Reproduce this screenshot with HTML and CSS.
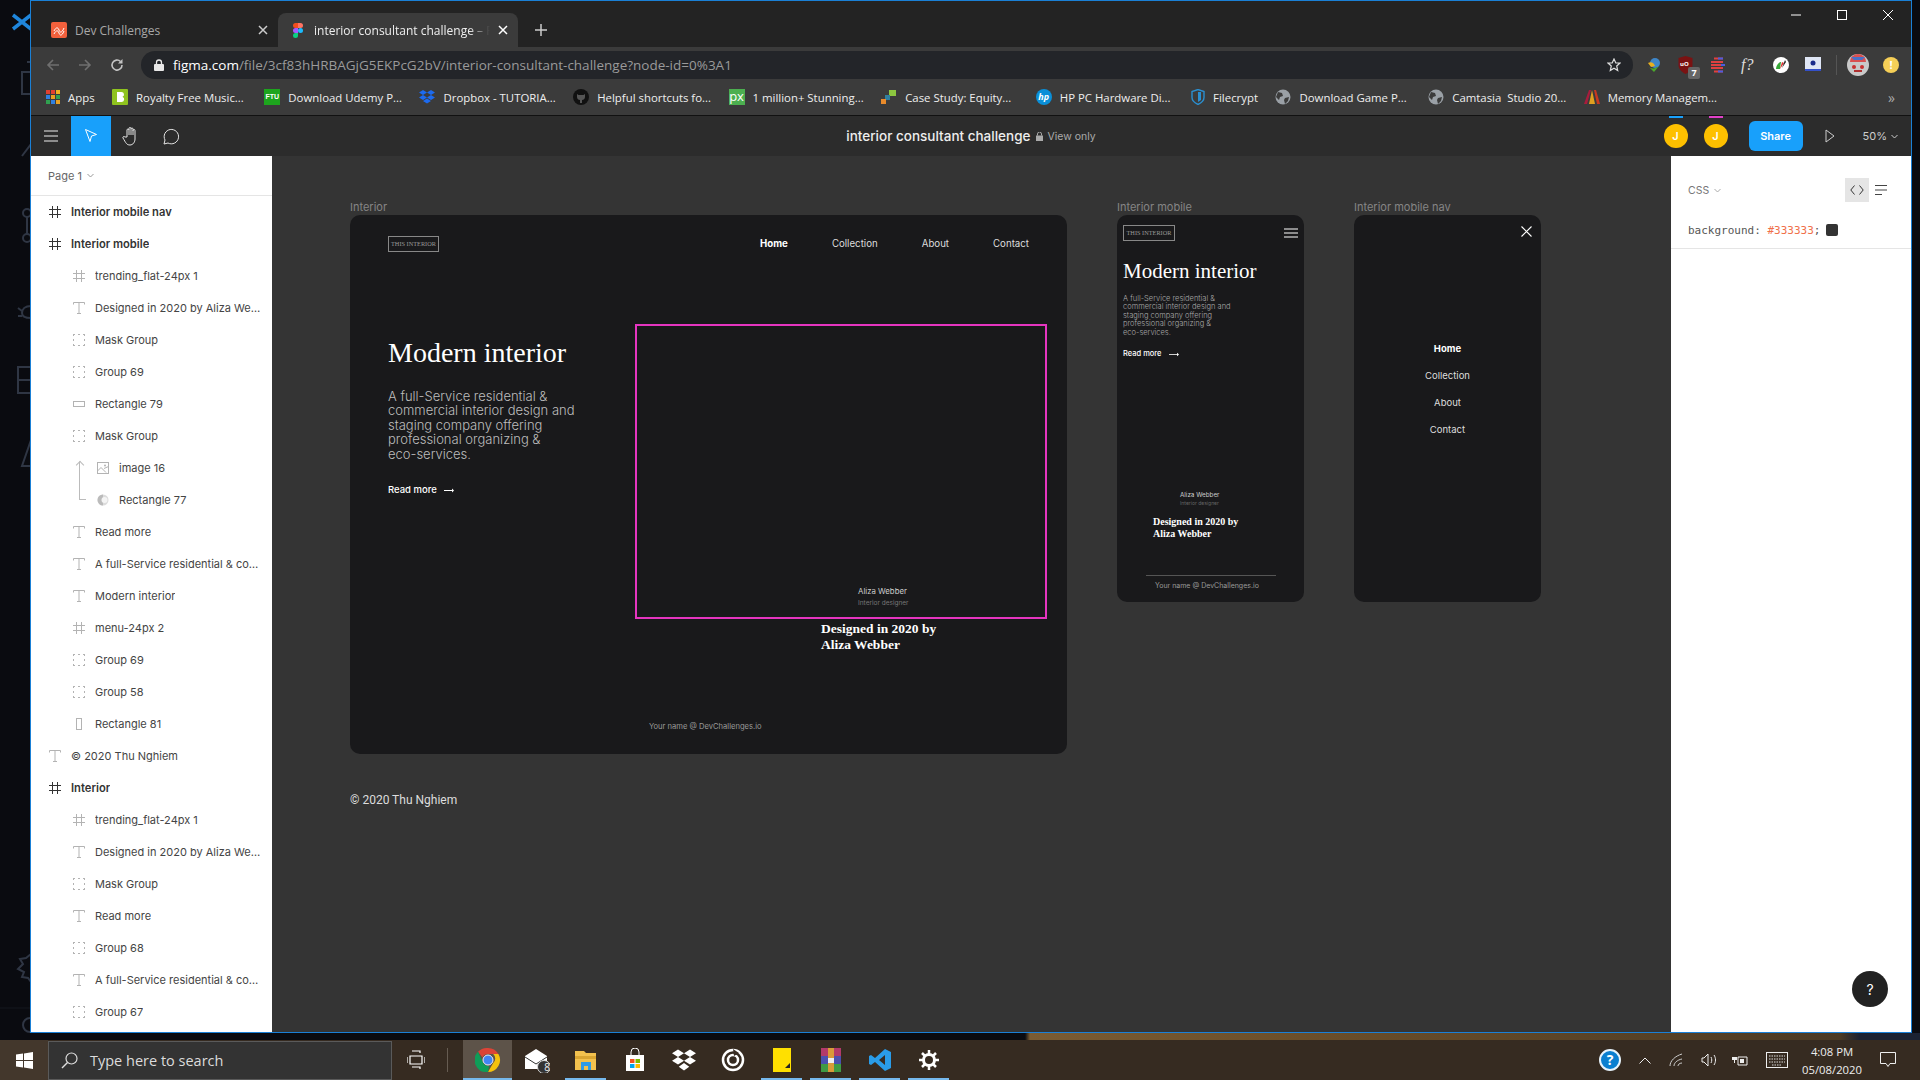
FILE: index.html
```html
<!DOCTYPE html>
<html lang="en">
<head>
  <meta charset="UTF-8" />
  <title>interior consultant challenge – Figma</title>
  <link rel="stylesheet" href="styles.css">
</head>
<body>
  <svg class="sprites" width="0" height="0">
    <symbol id="i-frame" viewBox="0 0 12 12"><path d="M3.5 0v12M8.5 0v12M0 3.5h12M0 8.5h12" fill="none" stroke="currentColor"/></symbol>
    <symbol id="i-text" viewBox="0 0 12 12"><path d="M.5 2.5V.5h11v2M6 .5v11M4 11.500h4" fill="none" stroke="currentColor"/></symbol>
    <symbol id="i-group" viewBox="0 0 12 12"><path d="M0 .5h2M5 .5h2M10 .5h2M0 11.5h2M5 11.5h2M10 11.5h2M.5 0v2M.5 5v2M.5 10v2M11.5 0v2M11.5 5v2M11.5 10v2" fill="none" stroke="currentColor"/></symbol>
    <symbol id="i-wide" viewBox="0 0 12 12"><rect x=".5" y="3.5" width="11" height="5" fill="none" stroke="currentColor"/></symbol>
    <symbol id="i-tall" viewBox="0 0 12 12"><rect x="3.5" y=".5" width="5" height="11" fill="none" stroke="currentColor"/></symbol>
    <symbol id="i-image" viewBox="0 0 12 12"><rect x=".5" y=".5" width="11" height="11" fill="none" stroke="currentColor"/><path d="M.5 9L4 5.500l5 5M7 6.500l4.500-2" fill="none" stroke="currentColor"/><circle cx="8" cy="3.5" r="1" fill="currentColor"/></symbol>
    <symbol id="i-mask" viewBox="0 0 12 12"><circle cx="6" cy="6" r="5.5" fill="#dcdcdc"/><path d="M6 .5a5.500 5.500 0 0 0 0 11z" fill="#bbb"/><circle cx="7.5" cy="6" r="3" fill="#f4f4f4"/></symbol>
    <symbol id="i-globe" viewBox="0 0 16 16"><circle cx="8" cy="8" r="7.5" fill="#9aa0a6"/><path d="M3 3l4 1 1 3-3 1-1 3-3-3zM10 9l4-1-1 4-3 3-1-4z" fill="#3b3b3b"/></symbol>
  </svg>

  <div class="desktop">
    <svg class="rail" width="31" height="1033" viewBox="0 0 31 1033">
      <path d="M31 15L13 29M13 15l18 14" stroke="#1f86dc" stroke-width="3.500" fill="none"/>
      <g fill="none" stroke="#2f3644" stroke-width="2">
        <path d="M31 72h-9v22h9M27 62h4"/>
        <path d="M31 144l-9 12"/>
        <circle cx="27" cy="213" r="4"/><circle cx="27" cy="238" r="4"/><path d="M27 217v17"/>
        <path d="M31 302v-2M31 306c-6 0-9 3-9 7s3 5 9 5M18 308l4 3M18 316h4"/>
        <path d="M31 367H18v26h13M18 380h13"/>
        <path d="M31 440l-9 26h9"/>
        <path d="M31 954l-5 4-6 1 3 5-5 5 6 3-2 5 6 1 3 4"/>
        <circle cx="30" cy="1025" r="7"/>
      </g>
      <path d="M0 1008h31" stroke="#15181f"/>
    </svg>

    <div class="window">
      <div class="tabstrip">
        <div class="tab">
          <svg class="tab-icon" width="16" height="16" viewBox="0 0 16 16"><rect width="16" height="16" rx="2" fill="#f2603c"/><path d="M3 9c2-4 4-4 5-1s3 3 5-2M3 12c2-4 4-4 5-1s3 3 5-2" stroke="#fff" fill="none"/></svg>
          <span class="tab-title">Dev Challenges</span>
          <svg class="tab-close" width="10" height="10" viewBox="0 0 10 10"><path d="M1 1l8 8M9 1L1 9" stroke="currentColor" stroke-width="1.5"/></svg>
        </div>
        <div class="tab tab-active">
          <svg class="tab-icon" width="16" height="16" viewBox="0 0 16 16"><path d="M3 1h5v5H5.500a2.500 2.500 0 0 1 0-5z" fill="#f24e1e"/><path d="M8 1h2.500a2.500 2.500 0 0 1 0 5H8z" fill="#ff7262"/><path d="M3 8.500A2.500 2.500 0 0 1 5.500 6H8v5H5.500A2.500 2.500 0 0 1 3 8.500z" fill="#a259ff"/><circle cx="10.5" cy="8.5" r="2.5" fill="#1abcfe"/><path d="M5.500 11H8v2.500a2.500 2.500 0 1 1-2.500-2.500z" fill="#0acf83"/></svg>
          <span class="tab-title">interior consultant challenge – Figma</span>
          <svg class="tab-close" width="10" height="10" viewBox="0 0 10 10"><path d="M1 1l8 8M9 1L1 9" stroke="currentColor" stroke-width="1.5"/></svg>
        </div>
        <svg class="tab-new" width="14" height="14" viewBox="0 0 14 14"><path d="M7 1v12M1 7h12" stroke="#ccc" stroke-width="1.5"/></svg>
        <div class="winctl">
          <svg width="12" height="12" viewBox="0 0 12 12"><path d="M1 6h10" stroke="#fff"/></svg>
          <svg width="12" height="12" viewBox="0 0 12 12"><rect x="1.5" y="1.5" width="9" height="9" fill="none" stroke="#fff"/></svg>
          <svg width="12" height="12" viewBox="0 0 12 12"><path d="M1 1l10 10M11 1L1 11" stroke="#fff"/></svg>
        </div>
      </div>

      <div class="urlrow">
        <svg class="nav-icon" width="14" height="14" viewBox="0 0 14 14"><path d="M13 7H2M7 2L2 7l5 5" fill="none" stroke="#6f6f6f" stroke-width="1.6"/></svg>
        <svg class="nav-icon" width="14" height="14" viewBox="0 0 14 14"><path d="M1 7h11M7 2l5 5-5 5" fill="none" stroke="#6f6f6f" stroke-width="1.6"/></svg>
        <svg class="nav-icon" width="14" height="14" viewBox="0 0 14 14"><path d="M12 7a5 5 0 1 1-1.500-3.500" fill="none" stroke="#c4c4c4" stroke-width="1.6"/><path d="M12.500 1v4.500H8z" fill="#c4c4c4"/></svg>
        <div class="omnibox">
          <svg width="10" height="12" viewBox="0 0 10 12"><rect y="5" width="10" height="7" rx="1" fill="#e8e8e8"/><path d="M2.500 5V3.500a2.500 2.500 0 0 1 5 0V5" fill="none" stroke="#e8e8e8" stroke-width="1.3"/></svg>
          <span class="url"><b>figma.com</b>/file/3cf83hHRBAGjG5EKPcG2bV/interior-consultant-challenge?node-id=0%3A1</span>
          <svg class="star-icon" width="14" height="14" viewBox="0 0 14 14"><path d="M7 1l1.800 4H13l-3.300 3 1 4.500L7 10.200 3.300 12.500l1-4.500L1 5h4.200z" fill="none" stroke="#ddd" stroke-width="1.2"/></svg>
        </div>
        <div class="exts">
          <svg width="16" height="16" viewBox="0 0 16 16"><circle cx="9" cy="6" r="5" fill="#3f86c8"/><path d="M1 8c4 5 8 4 12 1l-5 6z" fill="#4ca82c"/><path d="M2 6c3-2 6 0 7 3l-4 1z" fill="#e8b020"/></svg>
          <span class="ext-ublock"><svg width="15" height="18" viewBox="0 0 15 18"><path d="M7.500 0l7 2v7c0 4-3 7-7 9-4-2-7-5-7-9V2z" fill="#7a1212"/></svg><b>uO</b><i>7</i></span>
          <svg width="16" height="16" viewBox="0 0 16 16"><path d="M5 1.500h9M2 5h12M2 8h14M2 11h12M5 14.500h9" stroke="#e04040" stroke-width="2"/><path d="M9 1.500h5M9 14.500h5M12 8h4" stroke="#4a5de0" stroke-width="2"/></svg>
          <span class="ext-f">f?</span>
          <svg width="16" height="16" viewBox="0 0 16 16"><circle cx="8" cy="8" r="8" fill="#fff"/><path d="M3 12c0-4 3-7 5-7l-1 7z" fill="#38a838"/><path d="M7 12l2-7 2 1z" fill="#e03030"/><path d="M9 11l3-8 1 2z" fill="#222"/></svg>
          <svg width="16" height="16" viewBox="0 0 16 16"><rect width="16" height="12" fill="#dfe6f5"/><circle cx="8" cy="6" r="2.5" fill="#1a2c8c"/><path d="M0 12h16v2H0z" fill="#3450c8"/></svg>
          <span class="ext-sep"></span>
          <svg width="22" height="22" viewBox="0 0 22 22"><circle cx="11" cy="11" r="11" fill="#c9c9c9"/><path d="M3 8a8 8 0 0 1 16 0z" fill="#d85050"/><path d="M4 3h14l-3 3H7z" fill="#4a70c8"/><circle cx="7" cy="13" r="2" fill="#c83030"/><circle cx="15" cy="13" r="2" fill="#c83030"/><path d="M7 17h8" stroke="#b03030" stroke-width="2"/></svg>
          <span class="ext-alert">!</span>
        </div>
      </div>

      <div class="bookmarks">
        <div class="bm"><svg width="14" height="14" viewBox="0 0 14 14"><path d="M0 0h4v4H0z" fill="#e04030"/><path d="M5 0h4v4H5z" fill="#e04030"/><path d="M10 0h4v4h-4z" fill="#f0b020"/><path d="M0 5h4v4H0z" fill="#3080e0"/><path d="M5 5h4v4H5z" fill="#e8a020"/><path d="M10 5h4v4h-4z" fill="#30a050"/><path d="M0 10h4v4H0z" fill="#30a050"/><path d="M5 10h4v4H5z" fill="#3080e0"/><path d="M10 10h4v4h-4z" fill="#e8a020"/></svg><span>Apps</span></div>
        <div class="bm"><svg width="16" height="16" viewBox="0 0 16 16"><rect width="16" height="16" rx="1" fill="#8fc31f"/><path d="M5 3h4.500a2.500 2.500 0 0 1 1 4.800A2.700 2.700 0 0 1 9.500 13H5z" fill="#fff"/></svg><span>Royalty Free Music...</span></div>
        <div class="bm bm-pad-s"><span class="fav-ftu">FTU</span><span>Download Udemy P...</span></div>
        <div class="bm"><svg width="16" height="16" viewBox="0 0 16 16"><path d="M4 1l4 2.500L4 6 0 3.500zM12 1l4 2.500L12 6 8 3.500zM4 6l4 2.500L4 11 0 8.500zM12 6l4 2.500-4 2.500-4-2.500zM4 12l4-2.500 4 2.500-4 2.500z" fill="#1d6bf0"/></svg><span>Dropbox - TUTORIA...</span></div>
        <div class="bm"><svg width="16" height="16" viewBox="0 0 16 16"><circle cx="8" cy="8" r="8" fill="#111"/><path d="M4 5l1.500 1h5L12 5v3c0 2-1.500 3-3 3v3H7v-3c-1.500 0-3-1-3-3z" fill="#555"/></svg><span>Helpful shortcuts fo...</span></div>
        <div class="bm"><span class="fav-px">px</span><span>1 million+ Stunning...</span></div>
        <div class="bm"><svg width="16" height="16" viewBox="0 0 16 16"><path d="M8 1h7v6H8z" fill="#8cc63f"/><path d="M4 6h5v5H4z" fill="#2f7f9f"/><path d="M0 10h5v5H0z" fill="#e88a2a"/></svg><span>Case Study: Equity...</span></div>
        <div class="bm bm-pad-l"><span class="fav-hp">hp</span><span>HP PC Hardware Di...</span></div>
        <div class="bm bm-pad-s"><svg width="14" height="16" viewBox="0 0 14 16"><path d="M7 .5l6 2v6c0 3-3 5.500-6 7-3-1.500-6-4-6-7v-6z" fill="none" stroke="#2a8fd0" stroke-width="1.4"/><path d="M7 3h3v8l-3 2z" fill="#2a8fd0"/></svg><span>Filecrypt</span></div>
        <div class="bm"><svg width="16" height="16"><use href="#i-globe"/></svg><span>Download Game P...</span></div>
        <div class="bm bm-pad-m"><svg width="16" height="16"><use href="#i-globe"/></svg><span>Camtasia &nbsp;Studio 20...</span></div>
        <div class="bm"><svg width="16" height="16" viewBox="0 0 16 16"><path d="M0 15L5 1h2L3 15z" fill="#a81c3c"/><path d="M5 15L8 1l3 14z" fill="#e0a020"/><path d="M10 1h2l4 14h-3z" fill="#c83820"/></svg><span>Memory Managem...</span></div>
        <span class="bm-more">»</span>
      </div>

      <div class="figbar">
        <div class="figbar-left">
          <div class="tool"><svg width="16" height="12" viewBox="0 0 16 12"><path d="M1 1h14M1 6h14M1 11h14" stroke="#eee"/></svg></div>
          <div class="tool tool-on"><svg width="14" height="16" viewBox="0 0 14 16"><path d="M1.500 1.500l11 5-5 1.500-1.500 5.500z" fill="none" stroke="#fff"/></svg></div>
          <div class="tool"><svg width="18" height="20" viewBox="0 0 18 20"><path d="M5 11V4a1 1 0 0 1 2 0V2.500a1 1 0 0 1 2 0V3a1 1 0 0 1 2 0v1.500a1 1 0 0 1 2 0V13c0 3-2 6-5 6-3.500 0-4-2-7-7-.6-1.300 1-2 2-1z" fill="none" stroke="#e4e4e4"/><path d="M7 4v5M9 3v6M11 4v5" stroke="#e4e4e4" fill="none"/></svg></div>
          <div class="tool"><svg width="18" height="18" viewBox="0 0 18 18"><path d="M2 17l1-4a7.200 7.200 0 1 1 3 3z" fill="none" stroke="#e4e4e4"/></svg></div>
        </div>
        <div class="figbar-title">
          <span class="doc-name">interior consultant challenge</span>
          <svg width="7" height="9" viewBox="0 0 7 9"><rect y="3.5" width="7" height="5.5" fill="#aaa"/><path d="M1.500 3.500V2a2 2 0 0 1 4 0v1.500" fill="none" stroke="#aaa"/></svg>
          <span class="view-only">View only</span>
        </div>
        <div class="figbar-right">
          <span class="avatar avatar-blue">J</span>
          <span class="avatar avatar-pink">J</span>
          <span class="share">Share</span>
          <svg class="play" width="10" height="14" viewBox="0 0 10 14"><path d="M1 1l8 6-8 6z" fill="none" stroke="#ccc"/></svg>
          <span class="zoom-level">50%</span>
          <svg width="7" height="5" viewBox="0 0 7 5"><path d="M.5 1l3 3 3-3" fill="none" stroke="#ccc"/></svg>
        </div>
      </div>

      <div class="workspace">
        <aside class="layers">
          <div class="page-row">Page 1 <svg width="7" height="5" viewBox="0 0 7 5"><path d="M.5 1l3 3 3-3" fill="none" stroke="#999"/></svg></div>
          <ul class="layer-list">
            <li class="layer top strong"><svg><use href="#i-frame"/></svg><span>Interior mobile nav</span></li>
            <li class="layer top strong"><svg><use href="#i-frame"/></svg><span>Interior mobile</span></li>
            <li class="layer"><svg><use href="#i-frame"/></svg><span>trending_flat-24px 1</span></li>
            <li class="layer"><svg><use href="#i-text"/></svg><span>Designed in 2020 by Aliza Webber</span></li>
            <li class="layer"><svg><use href="#i-group"/></svg><span>Mask Group</span></li>
            <li class="layer"><svg><use href="#i-group"/></svg><span>Group 69</span></li>
            <li class="layer"><svg><use href="#i-wide"/></svg><span>Rectangle 79</span></li>
            <li class="layer"><svg><use href="#i-group"/></svg><span>Mask Group</span></li>
            <li class="layer nested mask-arrow"><svg><use href="#i-image"/></svg><span>image 16</span></li>
            <li class="layer nested mask-end"><svg><use href="#i-mask"/></svg><span>Rectangle 77</span></li>
            <li class="layer"><svg><use href="#i-text"/></svg><span>Read more</span></li>
            <li class="layer"><svg><use href="#i-text"/></svg><span>A full-Service residential &amp; commercial</span></li>
            <li class="layer"><svg><use href="#i-text"/></svg><span>Modern interior</span></li>
            <li class="layer"><svg><use href="#i-frame"/></svg><span>menu-24px 2</span></li>
            <li class="layer"><svg><use href="#i-group"/></svg><span>Group 69</span></li>
            <li class="layer"><svg><use href="#i-group"/></svg><span>Group 58</span></li>
            <li class="layer"><svg><use href="#i-tall"/></svg><span>Rectangle 81</span></li>
            <li class="layer top"><svg class="faint"><use href="#i-text"/></svg><span>© 2020 Thu Nghiem</span></li>
            <li class="layer top strong"><svg><use href="#i-frame"/></svg><span>Interior</span></li>
            <li class="layer"><svg><use href="#i-frame"/></svg><span>trending_flat-24px 1</span></li>
            <li class="layer"><svg><use href="#i-text"/></svg><span>Designed in 2020 by Aliza Webber</span></li>
            <li class="layer"><svg><use href="#i-group"/></svg><span>Mask Group</span></li>
            <li class="layer"><svg><use href="#i-text"/></svg><span>Read more</span></li>
            <li class="layer"><svg><use href="#i-group"/></svg><span>Group 68</span></li>
            <li class="layer"><svg><use href="#i-text"/></svg><span>A full-Service residential &amp; commercial</span></li>
            <li class="layer"><svg><use href="#i-group"/></svg><span>Group 67</span></li>
          </ul>
        </aside>

        <main class="canvas">
          <span class="frame-label label-main">Interior</span>
          <section class="frame frame-main">
            <header class="site-head">
              <span class="logo">THIS INTERIOR</span>
              <nav class="site-nav">
                <a class="current">Home</a><a>Collection</a><a>About</a><a>Contact</a>
              </nav>
            </header>
            <div class="hero">
              <div class="hero-copy">
                <h1>Modern interior</h1>
                <p>A full-Service residential &amp; commercial interior design and staging company offering professional organizing &amp;<br>eco-services.</p>
                <span class="read-more">Read more <svg width="10" height="5" viewBox="0 0 10 5"><path d="M0 2.500h8.500" stroke="#fff"/><path d="M8 .5l2 2-2 2z" fill="#fff"/></svg></span>
              </div>
              <div>
                <div class="hero-image">
                  <span class="person">Aliza Webber</span>
                  <span class="role">Interior designer</span>
                </div>
                <div class="caption">Designed in 2020 by<br>Aliza Webber</div>
              </div>
            </div>
            <footer class="site-foot">Your name @ DevChallenges.io</footer>
          </section>

          <span class="copyright">© 2020 Thu Nghiem</span>

          <span class="frame-label label-mobile">Interior mobile</span>
          <section class="frame frame-mobile">
            <header class="m-head">
              <span class="logo m-logo">THIS INTERIOR</span>
              <svg width="14" height="10" viewBox="0 0 14 10"><path d="M0 1h14M0 5h14M0 9h14" stroke="#fff" stroke-width="1.2"/></svg>
            </header>
            <h2>Modern interior</h2>
            <p>A full-Service residential &amp; commercial interior design and staging company offering professional organizing &amp;<br>eco-services.</p>
            <span class="m-read">Read more <svg width="10" height="5" viewBox="0 0 10 5"><path d="M0 2.500h8.500" stroke="#fff" stroke-width=".8"/><path d="M8 .8l2 1.700-2 1.700z" fill="#fff"/></svg></span>
            <span class="m-person">Aliza Webber</span>
            <span class="m-role">Interior designer</span>
            <div class="m-caption">Designed in 2020 by<br>Aliza Webber</div>
            <div class="m-rule"></div>
            <span class="m-foot">Your name @ DevChallenges.io</span>
          </section>

          <span class="frame-label label-nav">Interior mobile nav</span>
          <section class="frame frame-nav">
            <svg class="nav-close" width="11" height="11" viewBox="0 0 11 11"><path d="M.5.5l10 10M10.500.5l-10 10" stroke="#fff" stroke-width="1.1"/></svg>
            <nav class="m-nav">
              <a class="current">Home</a><a>Collection</a><a>About</a><a>Contact</a>
            </nav>
          </section>
        </main>

        <aside class="inspect">
          <div class="inspect-head">
            <span class="css-label">CSS <svg width="7" height="5" viewBox="0 0 7 5"><path d="M.5 1l3 3 3-3" fill="none" stroke="#aaa"/></svg></span>
            <span class="code-btn"><svg width="14" height="10" viewBox="0 0 14 10"><path d="M4.500.5L.8 5l3.700 4.500M9.500.5L13.200 5 9.500 9.500" fill="none" stroke="#333"/></svg></span>
            <svg class="list-btn" width="12" height="10" viewBox="0 0 12 10"><path d="M0 .5h12M0 5h12M0 9.500h7" stroke="#444"/></svg>
          </div>
          <div class="code-row">
            <code>background: <em>#333333</em>;</code>
            <span class="swatch"></span>
          </div>
          <button class="help">?</button>
        </aside>
      </div>
    </div>
  </div>

  <div class="sliver"></div>

  <div class="taskbar">
    <div class="start"><svg width="17" height="17" viewBox="0 0 17 17"><path d="M0 2.500L7 1.500v6.500H0zM8 1.400L17 0v8H8zM0 9h7v6.500l-7-1zM8 9h9v8l-9-1.400z" fill="#fff"/></svg></div>
    <div class="search">
      <svg width="17" height="17" viewBox="0 0 17 17"><circle cx="10.5" cy="6.5" r="5.5" fill="none" stroke="#ddd" stroke-width="1.2"/><path d="M6.500 10.500L1 16" stroke="#ddd" stroke-width="1.4"/></svg>
      <span>Type here to search</span>
    </div>
    <svg class="taskview" width="18" height="20" viewBox="0 0 18 20"><path d="M5 1h8v2M5 17h8v2M3 6h12v8H3zM0 7v6M18 7v6" fill="none" stroke="#fff" stroke-width="1.2"/></svg>
    <span class="task-sep"></span>
    <div class="apps">
      <div class="app app-open app-hot"><svg width="26" height="26" viewBox="0 0 26 26"><path d="M13 1a12 12 0 0 1 10.400 6H13a6 6 0 0 0-5.500 3.500L3 4.700A12 12 0 0 1 13 1z" fill="#db4437"/><path d="M23.400 7A12 12 0 0 1 13 25l5.200-9a6 6 0 0 0 0-9z" fill="#f4c20d"/><path d="M13 25A12 12 0 0 1 3 4.700L8.200 16a6 6 0 0 0 5.800 3z" fill="#0f9d58"/><circle cx="13" cy="13" r="5" fill="#4285f4" stroke="#eee"/></svg></div>
      <div class="app"><svg width="26" height="26" viewBox="0 0 26 26"><path d="M1 9l11-7 11 7v13H1z" fill="#fff"/><path d="M1 10l11 7 11-7" fill="none" stroke="#333"/><circle cx="20" cy="20" r="6.5" fill="#333" stroke="#ddd"/></svg><i class="mail-count">8</i></div>
      <div class="app app-open"><svg width="24" height="24" viewBox="0 0 24 24"><path d="M1 3h9l2 2h10v17H1z" fill="#f2c14e"/><path d="M1 8h21v3H1z" fill="#d9a532"/><path d="M7 14h10v8h-3v-4h-4v4H7z" fill="#2f9be8"/></svg></div>
      <div class="app"><svg width="24" height="24" viewBox="0 0 24 24"><path d="M3 7h18v16H3z" fill="#fff"/><path d="M8 8V4a4 4 0 0 1 8 0v4" fill="none" stroke="#fff"/><path d="M7 11h4.500v4H7z" fill="#f25022"/><path d="M12.500 11H17v4h-4.500z" fill="#7fba00"/><path d="M7 16h4.500v4H7z" fill="#00a4ef"/><path d="M12.500 16H17v4h-4.500z" fill="#ffb900"/></svg></div>
      <div class="app"><svg width="24" height="24" viewBox="0 0 16 16"><path d="M4 1l4 2.500L4 6 0 3.500zM12 1l4 2.500L12 6 8 3.500zM4 6l4 2.500L4 11 0 8.500zM12 6l4 2.500-4 2.500-4-2.500zM8 10l3.500 2.500L8 15l-3.500-2.500z" fill="#fff"/></svg></div>
      <div class="app"><svg width="24" height="24" viewBox="0 0 24 24"><circle cx="12" cy="12" r="10" fill="none" stroke="#fff" stroke-width="2.5"/><circle cx="12" cy="12" r="5" fill="none" stroke="#fff" stroke-width="2.5"/><path d="M12 1l6 4-5 3z" fill="#3a2e24"/></svg></div>
      <div class="app app-open"><svg width="20" height="24" viewBox="0 0 20 24"><path d="M1 0h18v24H1z" fill="#ffe000"/><path d="M13 20l5-5v5z" fill="#222"/></svg></div>
      <div class="app app-open"><svg width="22" height="24" viewBox="0 0 22 24"><path d="M1 0h20v8H1z" fill="#b23a6a"/><path d="M1 8h20v8H1z" fill="#4a50b0"/><path d="M1 16h20v8H1z" fill="#3f9a45"/><path d="M8 0h6v24H8z" fill="#d99a3a"/><rect x="8" y="10" width="6" height="5" fill="#eee"/></svg></div>
      <div class="app app-open"><svg width="24" height="24" viewBox="0 0 24 24"><path d="M17 1l6 3v16l-6 3L7 14l-4 3-2-1V8l2-1 4 3zM17 7l-6 5 6 5z" fill="#2a9ce8"/></svg></div>
      <div class="app app-open"><svg width="20" height="20" viewBox="0 0 20 20"><circle cx="10" cy="10" r="5.5" fill="none" stroke="#fff" stroke-width="3"/><path d="M10 0v4M10 16v4M0 10h4M16 10h4M3 3l3 3M14 14l3 3M17 3l-3 3M6 14l-3 3" stroke="#fff" stroke-width="2.5"/></svg></div>
    </div>
    <div class="tray">
      <span class="help-tray">?</span>
      <svg width="12" height="7" viewBox="0 0 12 7"><path d="M.5 6.500L6 1l5.500 5.500" fill="none" stroke="#eee"/></svg>
      <svg width="14" height="14" viewBox="0 0 14 14"><path d="M1 13C1 8 6 3 13 1M5 13c0-3 3-6 8-7M9 13c0-1 1-3 4-3" fill="none" stroke="#ccc"/></svg>
      <svg width="16" height="16" viewBox="0 0 16 16"><path d="M1 6h2l4-4v12l-4-4H1z" fill="none" stroke="#eee"/><path d="M10 5c1 2 1 4 0 6M13 3c2 3 2 7 0 10" fill="none" stroke="#eee"/></svg>
      <svg class="tray-power" width="16" height="16" viewBox="0 0 16 16"><path d="M6 5h9v8H6z" fill="none" stroke="#eee"/><path d="M1 1v4M4 1v4M0 5h5v3H3v3H2V8H0z" fill="#eee"/><path d="M8 7h4v4H8z" fill="#eee"/></svg>
      <svg width="22" height="16" viewBox="0 0 22 16"><rect x=".5" y=".5" width="21" height="15" fill="none" stroke="#eee"/><path d="M3 4h16M3 7h16M3 10h16M6 13h10" stroke="#ddd" stroke-dasharray="1.500 1"/></svg>
      <div class="clock"><span>4:08 PM</span><span>05/08/2020</span></div>
      <svg width="16" height="16" viewBox="0 0 16 16"><path d="M.5.5h15v11H10l-2 3-2-3H.5z" fill="none" stroke="#eee"/></svg>
    </div>
  </div>
</body>
</html>
```

FILE: styles.css
```css
* { box-sizing: border-box; }

html, body {
  height: 100%;
  margin: 0;
  overflow: hidden;
  background: #0a0b10;
  font-family: 'Open Sans', sans-serif;
}

.sprites { position: absolute; }

.desktop {
  display: flex;
  height: 1033px;
}

.rail { flex: none; display: block; }

.window {
  width: 1882px;
  height: 1033px;
  display: flex;
  flex-direction: column;
  border: 1px solid #1a80d6;
  margin-left: -1px;
  background: #333;
}

/* chrome */
.tabstrip {
  height: 46px;
  flex: none;
  display: flex;
  align-items: flex-end;
  padding-left: 12px;
  background: #232323;
  position: relative;
}

.tab {
  width: 235px;
  height: 34px;
  display: flex;
  align-items: center;
  gap: 8px;
  padding: 0 10px 0 8px;
  color: #a8a8a8;
  font-size: 12px;
}

.tab-active {
  width: 240px;
  background: #3b3b3b;
  border-radius: 8px 8px 0 0;
  color: #eee;
  padding-left: 12px;
}

.tab-icon { flex: none; }

.tab-title {
  flex: 1;
  white-space: nowrap;
  overflow: hidden;
}

.tab-active .tab-title {
  -webkit-mask-image: linear-gradient(90deg, #000 88%, transparent);
  mask-image: linear-gradient(90deg, #000 88%, transparent);
}

.tab-close { flex: none; color: #ccc; }
.tab-active .tab-close { color: #fff; }

.tab-new { margin: 0 0 10px 16px; }

.winctl {
  display: flex;
  gap: 34px;
  position: absolute;
  right: 17px;
  top: 8px;
}

.urlrow {
  height: 36px;
  flex: none;
  display: flex;
  align-items: center;
  padding-left: 15px;
  background: #3b3b3b;
}

.nav-icon { margin-right: 18px; }

.omnibox {
  width: 1492px;
  height: 28px;
  margin-left: -1px;
  display: flex;
  align-items: center;
  gap: 9px;
  padding: 0 12px 0 13px;
  border-radius: 14px;
  background: #232529;
}

.url {
  flex: 1;
  color: #9a9a9a;
  font-size: 13.5px;
  white-space: nowrap;
}

.url b { color: #fff; font-weight: 400; }

.exts {
  display: flex;
  align-items: center;
  margin-left: 13px;
  gap: 16px;
}

.ext-ublock { position: relative; display: flex; }

.ext-ublock b {
  position: absolute;
  left: 2px;
  top: 4px;
  color: #fff;
  font: bold 6px/8px 'Open Sans', sans-serif;
}

.ext-ublock i {
  position: absolute;
  right: -7px;
  bottom: -5px;
  width: 12px;
  height: 12px;
  border-radius: 2px;
  background: #666;
  color: #fff;
  font: bold 9px/12px 'Open Sans', sans-serif;
  text-align: center;
}

.ext-f {
  width: 16px;
  color: #ddd;
  font: italic 16px 'Liberation Serif', serif;
}

.ext-sep { width: 1px; height: 20px; margin: 0 -6px 0 -1px; background: #555; }

.ext-alert {
  width: 16px;
  height: 16px;
  margin-left: -2px;
  border-radius: 50%;
  background: #f6cf57;
  color: #fff;
  font: bold 11px/16px 'Open Sans', sans-serif;
  text-align: center;
}

.bookmarks {
  height: 33px;
  flex: none;
  display: flex;
  align-items: center;
  gap: 17.5px;
  padding: 0 0 4px 15px;
  position: relative;
  background: #3b3b3b;
  border-bottom: 1px solid #111;
}

.bm {
  display: flex;
  align-items: center;
  gap: 8px;
  color: #eee;
  font-size: 11.4px;
  white-space: nowrap;
}

.bm-pad-s { margin-left: 3px; }
.bm-pad-m { margin-left: 4px; }
.bm-pad-l { margin-left: 7px; }

.fav-ftu, .fav-px, .fav-hp {
  width: 16px;
  height: 16px;
  color: #fff;
  text-align: center;
}

.fav-ftu { background: #1da51d; font: bold 7px/16px 'Liberation Sans', sans-serif; }
.fav-px { background: #4caf50; font: 13px/14px 'Open Sans', sans-serif; }
.fav-hp { background: #0a8fd8; border-radius: 50%; font: italic bold 9px/16px 'Open Sans', sans-serif; }

.bm-more {
  position: absolute;
  right: 16px;
  color: #aaa;
  font-size: 14px;
}

/* figma toolbar */
.figbar {
  height: 40px;
  flex: none;
  display: grid;
  grid-template-columns: 1fr auto 1fr;
  align-items: center;
  background: #2c2c2c;
}

.figbar-left { display: flex; }

.tool {
  width: 40px;
  height: 40px;
  display: flex;
  align-items: center;
  justify-content: center;
}

.tool-on { background: #18a0fb; }

.figbar-title {
  display: flex;
  align-items: center;
  gap: 4px;
  color: #aaa;
  font-family: Inter, sans-serif;
}

.doc-name { color: #eee; font-size: 13.5px; font-weight: 500; margin-right: 2px; }
.view-only { font-size: 10.5px; }

.figbar-right {
  display: flex;
  align-items: center;
  justify-content: flex-end;
  padding-right: 13px;
  font-family: Inter, sans-serif;
}

.avatar {
  width: 24px;
  height: 24px;
  margin-right: 16px;
  border-radius: 50%;
  background: #fdc000;
  color: #fff;
  font-size: 11px;
  font-weight: 600;
  line-height: 24px;
  text-align: center;
  position: relative;
}

.avatar-pink { margin-right: 22px; }

.avatar::before {
  content: "";
  position: absolute;
  left: 5px;
  top: -8px;
  width: 14px;
  height: 2px;
}

.avatar-blue::before { background: #18a0fb; }
.avatar-pink::before { background: #e040c8; }

.share {
  width: 54px;
  height: 30px;
  margin-left: -1px;
  border-radius: 6px;
  background: #18a0fb;
  color: #fff;
  font-size: 11px;
  font-weight: 600;
  line-height: 30px;
  text-align: center;
}

.play { margin: 0 28px 0 22px; }
.zoom-level { margin-right: 4px; color: #ccc; font-size: 11px; }

.workspace { flex: 1; display: flex; min-height: 0; }

/* layers */
.layers {
  width: 241px;
  flex: none;
  overflow: hidden;
  background: #fff;
  font-family: Inter, sans-serif;
}

.page-row {
  height: 40px;
  display: flex;
  align-items: center;
  gap: 5px;
  padding-left: 17px;
  border-bottom: 1px solid #e5e5e5;
  color: #666;
  font-size: 11px;
}

.layer-list { list-style: none; margin: 0; padding: 0; }

.layer {
  height: 32px;
  display: flex;
  align-items: center;
  gap: 10px;
  padding: 0 8px 0 42px;
  color: #444;
  font-size: 11px;
  position: relative;
}

.layer svg { width: 12px; height: 12px; flex: none; color: #b3b3b3; }
.layer span { overflow: hidden; white-space: nowrap; text-overflow: ellipsis; }

.layer.top { padding-left: 18px; }
.layer.top svg { color: #333; }
.layer.top svg.faint { color: #b3b3b3; }
.layer.strong { color: #333; font-size: 11.2px; font-weight: 600; }

.layer.nested { padding-left: 66px; }

.mask-arrow::before {
  content: "";
  position: absolute;
  left: 48px;
  top: 10px;
  height: 38px;
  border-left: 1px solid #bbb;
}

.mask-arrow::after {
  content: "";
  position: absolute;
  left: 46px;
  top: 10px;
  width: 5px;
  height: 5px;
  border: solid #bbb;
  border-width: 1px 0 0 1px;
  transform: rotate(45deg);
}

.mask-end::before {
  content: "";
  position: absolute;
  left: 48px;
  top: 15px;
  width: 7px;
  border-top: 1px solid #bbb;
}

/* canvas */
.canvas {
  flex: 1;
  position: relative;
  background: #343434;
  overflow: hidden;
}

.frame-label {
  position: absolute;
  top: 44px;
  color: #858585;
  font: 11px/14px Inter, sans-serif;
}

.label-main { left: 78px; }
.label-mobile { left: 845px; }
.label-nav { left: 1082px; }

.frame {
  position: absolute;
  top: 59px;
  border-radius: 10px;
  background: #19191b;
  color: #fff;
}

.frame-main { left: 78px; width: 717px; height: 539px; padding-top: 21px; }
.frame-mobile { left: 845px; width: 187px; height: 387px; padding: 9.5px 6px 0; }
.frame-nav { left: 1082px; width: 187px; height: 387px; }

.site-head {
  display: flex;
  align-items: center;
  justify-content: space-between;
  padding: 0 38px;
}

.logo {
  width: 51px;
  height: 16px;
  border: 1px solid #888;
  color: #999;
  font: 6.3px/14px 'Liberation Serif', serif;
  text-align: center;
  white-space: nowrap;
}

.site-nav {
  display: flex;
  gap: 44px;
  font: 9.7px/14px Inter, sans-serif;
  color: #ddd;
}

.current { font-weight: 700; color: #fff; }

.hero {
  display: flex;
  margin-top: 72px;
}

.hero-copy { width: 285px; padding: 12px 0 0 38px; }

.hero-copy h1 {
  margin: 0;
  font: 400 28px/34px 'Liberation Serif', serif;
}

.hero-copy p {
  width: 200px;
  margin: 18.5px 0 23px;
  color: #bdbdbd;
  font: 300 13px/14.5px Inter, sans-serif;
}

.read-more {
  display: flex;
  align-items: center;
  gap: 7px;
  font: 500 9.5px/12px Inter, sans-serif;
}

.hero-image {
  width: 412px;
  height: 295px;
  display: flex;
  flex-direction: column;
  justify-content: flex-end;
  padding: 0 0 8px 221px;
  border: 2px solid #e535c0;
}

.person { color: #ccc; font: 7.8px/12px Inter, sans-serif; }
.role { color: #777; font: 6.5px/12px Inter, sans-serif; }

.caption {
  margin: 2px 0 0 186px;
  font: 700 13.5px/16px 'Liberation Serif', serif;
}

.site-foot {
  margin: 68px 0 0 299px;
  color: #999;
  font: 7.6px/12px Inter, sans-serif;
}

.copyright {
  position: absolute;
  left: 78px;
  top: 636px;
  color: #ddd;
  font: 12px/16px Roboto, sans-serif;
}

/* mobile frame */
.m-head { display: flex; align-items: center; justify-content: space-between; }
.m-logo { width: 52px; }

.frame-mobile h2 {
  margin: 18.5px 0 11.75px;
  font: 400 21px/24px 'Liberation Serif', serif;
}

.frame-mobile p {
  width: 125px;
  margin: 0 0 11.75px;
  color: #aaa;
  font: 300 7.5px/8.5px Inter, sans-serif;
}

.m-read {
  display: flex;
  align-items: center;
  gap: 7px;
  font: 500 7.5px/10px Inter, sans-serif;
}

.m-person, .m-role, .m-foot, .m-caption { display: block; }

.m-person { margin: 132px 0 0 57px; color: #ccc; font: 6.3px/8px Inter, sans-serif; }
.m-role { margin-left: 57px; color: #666; font: 5px/8px Inter, sans-serif; }

.m-caption {
  margin: 9px 0 0 30px;
  font: 700 10px/12px 'Liberation Serif', serif;
}

.m-rule { width: 130px; height: 1px; margin: 35px 0 0 23px; background: #555; }

.m-foot {
  margin: 4.5px 0 0 32px;
  color: #999;
  font: 7px/10px Inter, sans-serif;
  white-space: nowrap;
}

.nav-close { position: absolute; right: 9px; top: 11px; }

.m-nav {
  display: flex;
  flex-direction: column;
  align-items: center;
  gap: 17px;
  padding-top: 129px;
  color: #ddd;
  font: 9.5px/10px Inter, sans-serif;
}

/* inspect panel */
.inspect {
  width: 240px;
  flex: none;
  position: relative;
  background: #fff;
}

.inspect-head {
  height: 68px;
  display: flex;
  align-items: center;
  padding: 0 24px 0 17px;
}

.css-label {
  flex: 1;
  display: flex;
  align-items: center;
  gap: 5px;
  color: #777;
  font: 10.5px Inter, sans-serif;
}

.code-btn {
  width: 24px;
  height: 24px;
  display: flex;
  align-items: center;
  justify-content: center;
  margin-right: 6px;
  background: #e5e5e5;
}

.code-row {
  height: 24px;
  display: flex;
  align-items: center;
  gap: 6px;
  padding-left: 17px;
  margin-top: -6px;
  color: #555;
  font: 11px 'DejaVu Sans Mono', monospace;
}

.code-row code { font: inherit; }
.code-row em { color: #f0704a; font-style: normal; }

.swatch { width: 12px; height: 12px; border-radius: 2px; background: #333; }

.inspect::after {
  content: "";
  position: absolute;
  left: 0;
  right: 0;
  top: 92px;
  border-top: 1px solid #e5e5e5;
}

.help {
  position: absolute;
  right: 23px;
  bottom: 25px;
  width: 36px;
  height: 36px;
  border: none;
  border-radius: 50%;
  background: #222;
  color: #fff;
  font: 14px Inter, sans-serif;
}

/* desktop strip under the window */
.sliver {
  height: 7px;
  background: linear-gradient(90deg, #0a0b10 1025px, #7a5c33 1030px, #6b4f2a 1300px, #4b3a24 1840px, #1b2232 1860px);
}

/* taskbar */
.taskbar {
  height: 40px;
  display: flex;
  align-items: center;
  background: #362b21;
  position: relative;
  color: #eee;
}

.start {
  width: 48px;
  height: 40px;
  display: flex;
  align-items: center;
  justify-content: center;
  background: #43372c;
}

.search {
  width: 344px;
  height: 39px;
  display: flex;
  align-items: center;
  gap: 12px;
  padding-left: 12px;
  background: #333;
  border: 1px solid #5a5a5a;
  color: #dcdcdc;
  font-size: 14.5px;
}

.taskview { margin-left: 15px; }
.task-sep { width: 1px; height: 24px; margin: 0 15px 0 22px; background: #665c52; }

.apps { display: flex; }

.app {
  width: 49px;
  height: 40px;
  display: flex;
  align-items: center;
  justify-content: center;
  position: relative;
}

.app-open::after {
  content: "";
  position: absolute;
  left: 4px;
  right: 4px;
  bottom: 0;
  height: 2px;
  background: #76b9ed;
}

.app-hot { background: #5d5349; }
.app-hot::after { left: 0; right: 0; }

.mail-count {
  position: absolute;
  left: 28px;
  top: 20px;
  width: 14px;
  color: #eee;
  font: 10px/14px 'Open Sans', sans-serif;
  text-align: center;
}

.tray {
  position: absolute;
  right: 0;
  top: 0;
  height: 40px;
  display: flex;
  align-items: center;
  gap: 18px;
  padding-right: 24px;
}

.tray-power { margin-left: -3px; }

.help-tray {
  width: 22px;
  height: 22px;
  border-radius: 50%;
  background: #0a7fd0;
  border: 2px solid #e8f4fc;
  color: #fff;
  font: bold 14px/18px 'Open Sans', sans-serif;
  text-align: center;
}

.clock {
  display: flex;
  flex-direction: column;
  align-items: center;
  gap: 3px;
  margin-left: -4px;
  font-size: 11.3px;
  line-height: 15px;
}
```
